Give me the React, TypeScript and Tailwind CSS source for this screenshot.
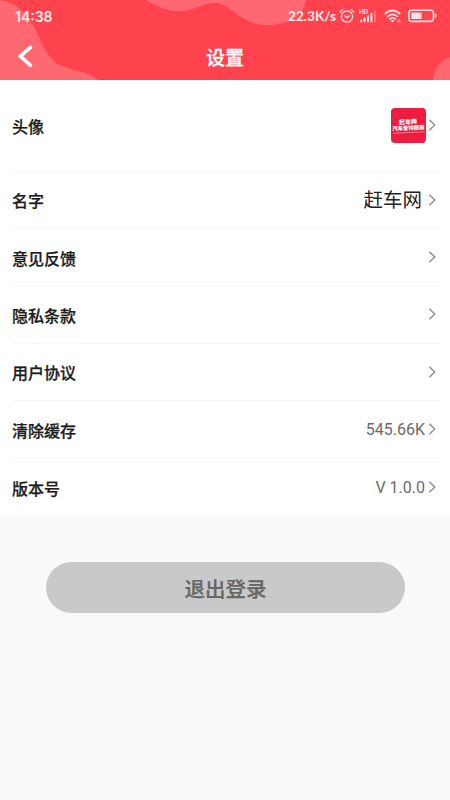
import clsx from 'clsx';
import type { ReactNode } from 'react';

const ChevronRight = () => (
  <svg width="9" height="14" viewBox="0 0 9 14" fill="none">
    <path d="M1.4 1.8 L6.7 7 L1.4 12.2" stroke="#929292" strokeWidth="1.5" />
  </svg>
);

const AlarmIcon = () => (
  <svg width="16" height="16" viewBox="0 0 16 16" fill="none">
    <g stroke="#ffe3e4" strokeWidth="1.3" strokeLinecap="round">
      <circle cx="8" cy="8.6" r="5.6" />
      <path d="M5.8 7.8 L8 9.8 L10.4 7.8" />
      <path d="M1.2 4 L3.7 1.7" />
      <path d="M14.8 4 L12.3 1.7" />
    </g>
  </svg>
);

const SignalIcon = () => (
  <svg width="18" height="16" viewBox="0 0 18 16">
    <text
      x="0"
      y="5.6"
      fill="#ffe3e4"
      fontSize="6.8"
      fontWeight="500"
      fontFamily="Roboto, sans-serif"
    >
      HD
    </text>
    <g fill="#ffe3e4">
      <rect x="1.2" y="11.7" width="2" height="2.5" rx="0.5" />
      <rect x="4.6" y="9.7" width="2" height="4.5" rx="0.5" />
      <rect x="8" y="7.2" width="2" height="7" rx="0.5" />
      <rect x="11.4" y="5" width="2" height="9.2" rx="0.5" />
      <rect x="15.2" y="2.6" width="1.5" height="11.6" rx="0.5" opacity="0.4" />
    </g>
  </svg>
);

const WifiIcon = () => (
  <svg width="18" height="16" viewBox="0 0 18 16" fill="none">
    <g stroke="#ffe3e4" strokeWidth="1.7">
      <path d="M0.8 6 Q8.5 -1 16.2 6" />
      <path d="M3.2 8.8 Q8.5 4 13.8 8.8" />
      <path d="M5.5 11.3 Q8.5 8.6 11.5 11.3" />
    </g>
    <path d="M6.7 12.6 Q8.5 11.4 10.3 12.6 L8.5 14.6 Z" fill="#ffe3e4" />
    <path
      d="M13.9 14.4 V11.6 L12.8 12.7 M15.6 11.4 V14.2 L16.8 13.1"
      stroke="#ffd0d2"
      strokeWidth="0.8"
    />
  </svg>
);

const BatteryIcon = () => (
  <svg width="29" height="14" viewBox="0 0 29 14" fill="none">
    <rect
      x="0.9"
      y="1.2"
      width="24.6"
      height="11.2"
      rx="2.8"
      stroke="#ffe3e4"
      strokeWidth="1.6"
    />
    <rect x="3.2" y="3.6" width="10.4" height="6.4" rx="1" fill="#ffe3e4" />
    <rect x="27" y="4.8" width="1.5" height="4" rx="0.7" fill="#ffe3e4" />
  </svg>
);

const HeaderWaves = () => (
  <svg
    className="absolute inset-0"
    width="450"
    height="80"
    viewBox="0 0 450 80"
    fill="#ff6870"
  >
    <path d="M0 0 C14 2 24 10 33 25 C41 39 45 57 60 65 C73 71 88 71 98 80 H0 Z" />
    <path d="M146 0 C158 8 170 12 184 11 C198 9 204 2 218 3 C232 6 243 25 266 25 C290 25 304 16 306 0 Z" />
    <path d="M433 80 C434 69 439 61 450 57 V80 Z" />
  </svg>
);

const Avatar = () => (
  <div className="flex h-[35px] w-[35px] flex-col items-center justify-center overflow-hidden rounded-[4px] bg-[#ee1c3e] text-white">
    <div className="flex -rotate-3 flex-col items-center font-black whitespace-nowrap">
      <span className="text-[6px] leading-[7px]">赶车网</span>
      <span className="text-[5.4px] leading-[7px]">汽车爱特图斯</span>
      <span className="h-px w-[31px] bg-[#f77a8c]" />
    </div>
  </div>
);

type RowProps = {
  label: string;
  value?: ReactNode;
  tall?: boolean;
  last?: boolean;
};

const Row = ({ label, value, tall, last }: RowProps) => (
  <div
    className={clsx(
      'ml-3 mr-[10px] flex items-center justify-between',
      tall ? 'h-[91.5px]' : 'h-[57.4px]',
      !last && 'border-b border-[#f7f7f7]',
    )}
  >
    <span className="pt-[5px] text-[16px] leading-6 font-medium text-[#1c1c1c] [-webkit-text-stroke:0.25px_#1c1c1c]">
      {label}
    </span>
    <div className="mr-[3px] flex items-center">
      {value}
      <ChevronRight />
    </div>
  </div>
);

const App = () => {
  return (
    <div className="min-h-[800px] w-[450px] bg-[#f9f9f9] font-['Roboto','Noto_Sans_CJK_SC',sans-serif]">
      <header className="relative h-20 overflow-hidden bg-[#ff434e] text-white">
        <HeaderWaves />
        <div className="relative flex h-8 items-center justify-between pr-[13px] pl-[15px] text-[#ffebec]">
          <span className="font-['Inter',sans-serif] text-[14px] font-semibold">
            14:38
          </span>
          <div className="flex items-center">
            <span className="mr-[3px] font-['Lato',sans-serif] text-[13.6px] font-bold">
              22.3K/s
            </span>
            <AlarmIcon />
            <span className="ml-1">
              <SignalIcon />
            </span>
            <span className="ml-[7px]">
              <WifiIcon />
            </span>
            <span className="ml-[6px]">
              <BatteryIcon />
            </span>
          </div>
        </div>
        <div className="relative flex h-12 items-center justify-center">
          <button type="button" className="absolute top-[13px] left-[16px]">
            <svg width="17" height="23" viewBox="0 0 17 23" fill="none">
              <path
                d="M14.4 2.4 L4.4 11.3 L14.4 20.2"
                stroke="#fff"
                strokeWidth="3.6"
                strokeLinecap="round"
              />
            </svg>
          </button>
          <h1 className="pt-[5px] text-[19px] leading-6 font-medium [-webkit-text-stroke:0.3px_#fff]">
            设置
          </h1>
        </div>
      </header>

      <main>
        <div className="bg-white">
          <Row
            label="头像"
            tall
            value={
              <span className="mr-[2px]">
                <Avatar />
              </span>
            }
          />
          <Row
            label="名字"
            value={
              <span className="mr-[6px] pt-[3px] text-[19.5px] leading-6 text-[#222]">
                赶车网
              </span>
            }
          />
          <Row label="意见反馈" />
          <Row label="隐私条款" />
          <Row label="用户协议" />
          <Row
            label="清除缓存"
            value={
              <span className="mr-[3px] pt-px text-[16px] leading-6 text-[#6a6a6a]">
                545.66K
              </span>
            }
          />
          <Row
            label="版本号"
            last
            value={
              <span className="mr-[3px] pt-px text-[16px] leading-6 text-[#6a6a6a]">
                V 1.0.0
              </span>
            }
          />
        </div>
        <button
          type="button"
          className="mt-[46px] ml-[46px] flex h-[51px] w-[359px] items-center justify-center rounded-full bg-[#c9c9c9] pt-[7px] text-[20.5px] font-medium text-[#666] [-webkit-text-stroke:0.25px_#666]"
        >
          退出登录
        </button>
      </main>
    </div>
  );
};

export default App;
